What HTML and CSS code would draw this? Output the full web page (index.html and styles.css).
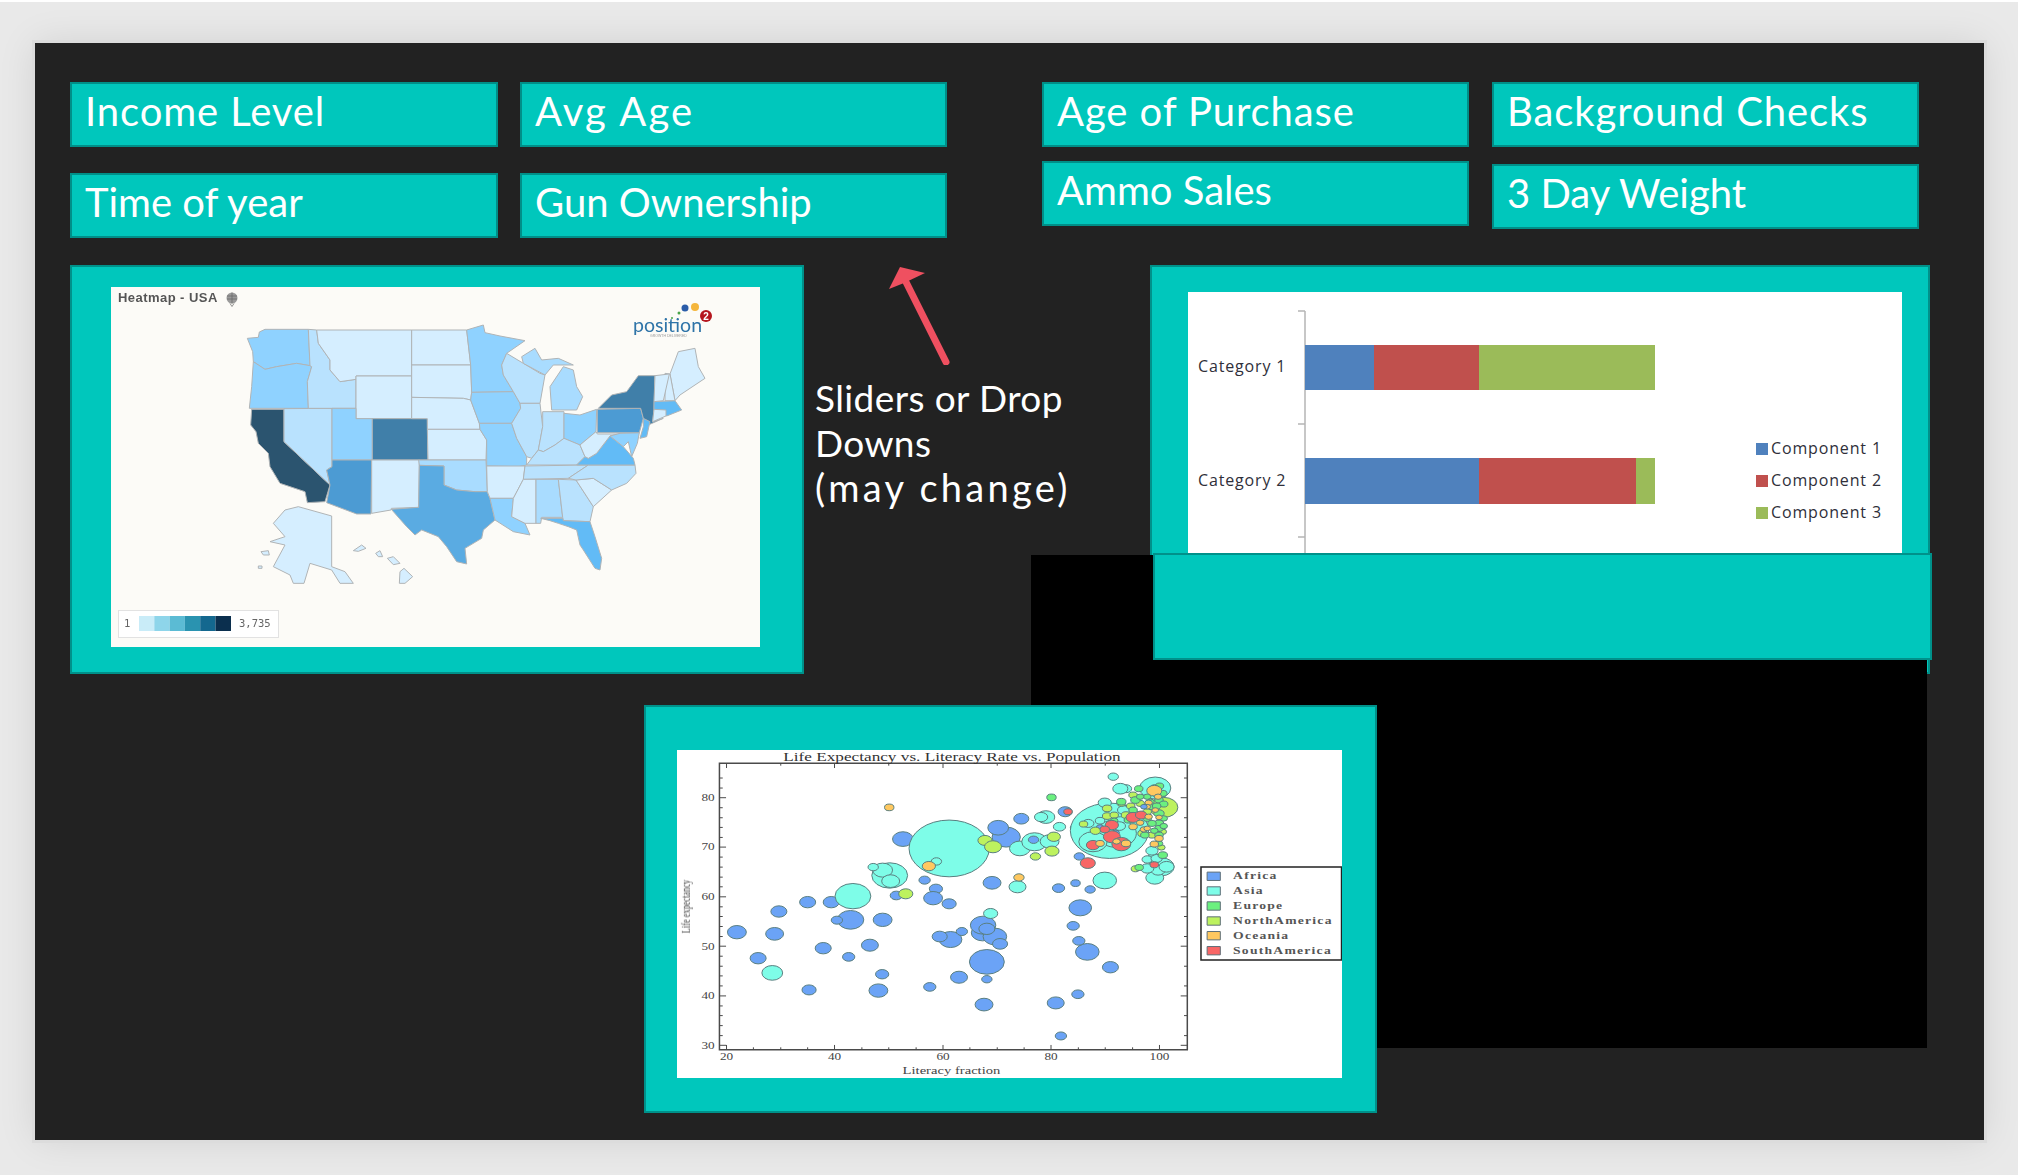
FILE: index.html
```html
<!DOCTYPE html>
<html lang="en">
<head>
<meta charset="utf-8">
<title>Dashboard mockup</title>
<link rel="stylesheet" href="styles.css">
</head>
<body>
<main class="slide">
  <section class="filters">
    <div class="filter-grid">
      <div class="btn wide">Income Level</div>
      <div class="btn xwide">Avg Age</div>
      <div class="btn">Time of year</div>
      <div class="btn">Gun Ownership</div>
    </div>
    <div class="filter-cols">
      <div class="filter-col first">
        <div class="btn wide">Age of Purchase</div>
        <div class="btn">Ammo Sales</div>
      </div>
      <div class="filter-col second">
        <div class="btn wide">Background Checks</div>
        <div class="btn">3 Day Weight</div>
      </div>
    </div>
  </section>

  <section class="middle">
    <div class="panel map-panel">
      <svg class="pic map" viewBox="0 0 649 360">
        <rect class="map-bg" width="649" height="360"/>
        <text class="map-title" x="7" y="15">Heatmap - USA</text>
        <g class="balloon"><circle cx="121" cy="11" r="5.500"/><path d="M116 9h10M116 12h10M121 5.500v11M119 16.500l2 3 2-3"/></g>
        <circle class="logo-o" cx="584" cy="20" r="4"/><circle class="logo-b" cx="574" cy="21" r="3.500"/><circle class="logo-g" cx="568" cy="26" r="1.500"/><circle class="logo-s" cx="561" cy="31" r="1"/>
        <circle class="logo-r" cx="595" cy="29" r="6"/><text class="logo-n" x="595" y="32.500">2</text>
        <text class="logo-t" x="522" y="45">position</text><text class="logo-u" x="539" y="50">GROWTH DELIVERED</text>
        <g transform="translate(119 23) scale(.33333)">
          <g class="states">
            <polygon class="s3" points="52,85 85,82 88,66 105,58 235,58 240,167 200,160 140,170 105,178 70,155 68,125"/>
            <polygon class="s3" points="70,155 105,178 140,170 200,160 240,167 245,170 232,215 235,295 58,295 65,230"/>
            <polygon class="s8" points="65,298 162,298 162,395 300,525 285,575 232,578 225,545 150,520 120,470 115,430 85,400 78,365 62,345"/>
            <polygon class="s1" points="162,296 306,295 306,470 290,480 300,525 162,395"/>
            <polygon class="s1" points="235,58 260,60 265,100 300,150 300,180 330,215 378,208 378,295 235,295 232,215 245,170 240,167"/>
            <polygon class="s0" points="260,60 545,60 545,198 378,198 378,208 330,215 300,180 300,150 265,100"/>
            <polygon class="s0" points="378,198 545,198 545,326 378,326"/>
            <polygon class="s3" points="306,295 378,295 378,326 427,326 427,450 306,450"/>
            <polygon class="s7" points="427,326 592,326 594,450 427,450"/>
            <polygon class="s6" points="306,450 425,450 423,612 380,612 290,578 300,525 290,480 306,470"/>
            <polygon class="s0" points="425,450 568,450 566,592 484,595 483,600 425,610"/>
            <polygon class="s0" points="545,60 710,60 722,165 545,165"/>
            <polygon class="s0" points="545,165 722,165 725,247 722,270 700,265 545,262"/>
            <polygon class="s0" points="545,262 700,265 722,270 748,340 750,358 592,358 592,326 545,326"/>
            <polygon class="s0" points="592,358 750,358 770,390 768,450 594,450"/>
            <polygon class="s2" points="566,450 768,450 772,545 735,545 680,540 642,525 642,468 568,466"/>
            <polygon class="s5" points="568,466 642,468 642,525 680,540 735,545 772,545 780,565 795,630 760,660 755,685 705,715 710,762 680,755 650,710 625,680 575,660 555,675 530,650 484,598 566,592"/>
            <polygon class="s3" points="710,60 760,45 765,68 810,78 885,92 830,130 815,165 820,195 850,245 725,247 722,165"/>
            <polygon class="s3" points="725,247 850,245 870,280 872,295 845,340 748,340 722,270"/>
            <polygon class="s3" points="748,340 845,340 860,385 890,440 890,465 865,470 770,468 770,390 750,358"/>
            <polygon class="s0" points="770,468 885,468 880,508 850,565 780,565 772,545"/>
            <polygon class="s3" points="780,565 850,565 845,620 885,640 900,675 850,665 795,630"/>
            <polygon class="s1" points="830,130 880,160 930,190 945,195 930,280 870,280 850,245 820,195 815,165"/>
            <polygon class="s1" points="870,280 930,280 938,350 925,420 905,445 890,440 860,385 845,340 872,295"/>
            <polygon class="s2" points="875,140 915,115 935,150 985,145 1030,165 970,165 945,195 880,160"/>
            <polygon class="s2" points="965,300 960,230 1000,170 1030,180 1040,230 1058,260 1040,300"/>
            <polygon class="s1" points="938,305 1002,305 1002,385 975,405 940,425 925,420 938,350"/>
            <polygon class="s3" points="1002,310 1050,315 1100,298 1098,365 1050,405 1002,385"/>
            <polygon class="s1" points="890,465 905,445 925,420 940,425 975,405 1002,385 1050,405 1065,440 1040,465"/>
            <polygon class="s1" points="885,468 1075,465 1015,505 880,508"/>
            <polygon class="s0" points="880,508 918,508 918,640 885,640 845,620 850,565"/>
            <polygon class="s2" points="918,508 985,508 998,622 935,622 932,640 918,640"/>
            <polygon class="s1" points="985,508 1038,510 1090,590 1080,635 1000,632 998,622"/>
            <polygon class="s4" points="932,625 998,625 1000,632 1080,635 1095,680 1115,745 1110,780 1095,775 1060,720 1050,705 1040,660 1015,650 985,640 960,632"/>
            <polygon class="s0" points="1038,510 1090,505 1145,540 1090,590"/>
            <polygon class="s1" points="1015,505 1075,465 1215,465 1218,490 1190,520 1145,540 1090,505 1038,510"/>
            <polygon class="s4" points="1040,465 1065,440 1075,445 1100,430 1140,378 1180,410 1210,445 1215,465"/>
            <polygon class="s0" points="1050,405 1098,365 1102,372 1125,372 1170,372 1140,378 1100,430 1075,445 1065,440"/>
            <polygon class="s3" points="1170,370 1228,368 1222,400 1205,440 1195,395 1180,410 1140,378"/>
            <polygon class="s6" points="1102,298 1232,295 1240,325 1228,368 1102,368"/>
            <polygon class="s7" points="1105,295 1145,255 1190,245 1225,197 1275,197 1272,300 1268,335 1300,325 1255,345 1240,325 1232,295"/>
            <polygon class="s4" points="1240,325 1260,335 1250,380 1230,385 1240,350"/>
            <polygon class="s4" points="1272,275 1335,272 1355,300 1310,318 1272,298"/>
            <polygon class="s0" points="1272,298 1308,300 1308,318 1268,335"/>
            <polygon class="s0" points="1320,192 1345,125 1395,115 1405,170 1425,205 1350,255 1335,272"/>
            <polygon class="s0" points="1305,190 1320,192 1335,272 1305,272"/>
            <polygon class="s0" points="1275,197 1318,192 1300,272 1272,275"/>
            <polygon class="s0" points="130,640 165,600 205,590 305,618 305,770 345,785 370,820 330,820 305,780 240,760 222,820 190,820 180,795 130,770 165,705 120,695 165,680"/>
            <polygon class="s0" points="510,785 522,775 548,800 525,820 508,820"/>
            <polygon class="s0" points="370,722 395,705 408,715 385,724"/>
            <polygon class="s0" points="437,730 450,722 458,740 445,740"/>
            <polygon class="s0" points="472,745 490,740 510,760 490,764"/>
            <polygon class="s0" points="93,725 115,722 118,735 100,735"/>
            <polygon class="s0" points="85,768 96,768 96,775 85,775"/>
          </g>
        </g>
        <rect class="map-legend" x="7.500" y="323.500" width="160" height="27"/>
        <text class="map-leg-t" x="13" y="340">1</text>
        <rect class="l1" x="28" y="329" width="15.300" height="15"/><rect class="l2" x="43.300" y="329" width="15.300" height="15"/><rect class="l3" x="58.600" y="329" width="15.300" height="15"/><rect class="l4" x="73.900" y="329" width="15.300" height="15"/><rect class="l5" x="89.200" y="329" width="15.300" height="15"/><rect class="l6" x="104.500" y="329" width="15.500" height="15"/>
        <text class="map-leg-t" x="128" y="340">3,735</text>
      </svg>
    </div>

    <div class="note">
      <svg class="arrow" viewBox="0 0 347 100">
        <line class="arrow-line" x1="142" y1="97" x2="101" y2="15"/>
        <polygon class="arrow-head" points="96,2 121,8 100,18 85,24"/>
      </svg>
      <p class="note-text">Sliders or Drop<br>Downs<br><span class="note-wide">(may change)</span></p>
    </div>

    <div class="panel chart-panel">
      <svg class="pic chart" viewBox="0 0 714 340">
        <rect class="white" width="714" height="340"/>
        <path class="axis" d="M117 19V340M110 19h7M110 132h7M110 245h7"/>
        <rect class="c1" x="117" y="53" width="69" height="45"/><rect class="c2" x="186" y="53" width="105" height="45"/><rect class="c3" x="291" y="53" width="176" height="45"/>
        <rect class="c1" x="117" y="166" width="174" height="46"/><rect class="c2" x="291" y="166" width="157" height="46"/><rect class="c3" x="448" y="166" width="19" height="46"/>
        <text class="chart-t" x="10" y="80">Category 1</text>
        <text class="chart-t" x="10" y="194">Category 2</text>
        <rect class="c1" x="568" y="151" width="12" height="12"/><text class="chart-t" x="583" y="162">Component 1</text>
        <rect class="c2" x="568" y="183" width="12" height="12"/><text class="chart-t" x="583" y="194">Component 2</text>
        <rect class="c3" x="568" y="215" width="12" height="12"/><text class="chart-t" x="583" y="226">Component 3</text>
      </svg>
    </div>
  </section>

  <section class="panel scatter-panel">
    <svg class="pic scatter" viewBox="78 150 1410 983" preserveAspectRatio="none">
      <rect class="white" x="78" y="150" width="1410" height="983"/>
      <g class="bubbles">
        <g class="af">
          <circle cx="205" cy="696" r="20"/><circle cx="250" cy="774" r="17"/><circle cx="285" cy="701" r="19"/><circle cx="294" cy="634" r="17"/><circle cx="355" cy="606" r="17"/><circle cx="405" cy="606" r="17"/><circle cx="388" cy="744" r="17"/><circle cx="442" cy="770" r="13"/><circle cx="446" cy="659" r="28"/><circle cx="417" cy="660" r="12"/><circle cx="514" cy="659" r="20"/><circle cx="487" cy="735" r="18"/><circle cx="513" cy="822" r="14"/><circle cx="358" cy="869" r="15"/><circle cx="505" cy="871" r="20"/><circle cx="543" cy="586" r="13"/><circle cx="603" cy="540" r="12"/><circle cx="627" cy="566" r="14"/><circle cx="621" cy="594" r="20"/><circle cx="655" cy="611" r="15"/><circle cx="658" cy="718" r="24"/><circle cx="635" cy="709" r="16"/><circle cx="682" cy="694" r="12"/><circle cx="726" cy="698" r="24"/><circle cx="727" cy="675" r="27"/><circle cx="752" cy="709" r="25"/><circle cx="735" cy="686" r="17"/><circle cx="763" cy="731" r="16"/><circle cx="735" cy="785" r="37"/><circle cx="735" cy="837" r="11"/><circle cx="614" cy="860" r="13"/><circle cx="676" cy="831" r="18"/><circle cx="729" cy="913" r="19"/><circle cx="746" cy="548" r="19"/><circle cx="557" cy="417" r="22"/><circle cx="776" cy="411" r="30"/><circle cx="759" cy="383" r="22"/><circle cx="808" cy="356" r="16"/><circle cx="901" cy="335" r="15"/><circle cx="923" cy="383" r="11"/><circle cx="931" cy="469" r="11"/><circle cx="881" cy="908" r="18"/><circle cx="928" cy="882" r="13"/><circle cx="892" cy="1007" r="12"/><circle cx="997" cy="801" r="17"/><circle cx="948" cy="755" r="25"/><circle cx="933" cy="623" r="24"/><circle cx="930" cy="722" r="13"/><circle cx="918" cy="677" r="13"/><circle cx="923" cy="549" r="10"/><circle cx="954" cy="568" r="11"/><circle cx="887" cy="564" r="13"/>
        </g>
        <g class="as">
          <circle cx="655" cy="445" r="85"/><circle cx="280" cy="818" r="22"/><circle cx="451" cy="588" r="38"/><circle cx="529" cy="526" r="38"/><circle cx="514" cy="510" r="21"/><circle cx="531" cy="543" r="19"/><circle cx="494" cy="501" r="11"/><circle cx="628" cy="484" r="11"/><circle cx="743" cy="640" r="15"/><circle cx="800" cy="560" r="18"/><circle cx="805" cy="445" r="22"/><circle cx="836" cy="425" r="27"/><circle cx="868" cy="424" r="20"/><circle cx="889" cy="380" r="13"/><circle cx="860" cy="351" r="19"/><circle cx="850" cy="351" r="14"/><circle cx="985" cy="541" r="25"/><circle cx="1003" cy="230" r="11"/><circle cx="1030" cy="266" r="12"/><circle cx="1018" cy="266" r="16"/><circle cx="1092" cy="264" r="33"/><circle cx="995" cy="392" r="83"/><circle cx="1010" cy="400" r="42"/><circle cx="960" cy="425" r="30"/><circle cx="985" cy="308" r="14"/><circle cx="1025" cy="330" r="13"/><circle cx="1018" cy="360" r="10"/><circle cx="1016" cy="378" r="13"/><circle cx="975" cy="362" r="10"/><circle cx="950" cy="370" r="12"/><circle cx="1105" cy="500" r="27"/><circle cx="1091" cy="533" r="19"/><circle cx="1098" cy="510" r="15"/><circle cx="1075" cy="505" r="14"/><circle cx="1116" cy="500" r="16"/><circle cx="1090" cy="475" r="15"/><circle cx="1075" cy="478" r="11"/><circle cx="1095" cy="475" r="12"/><circle cx="1085" cy="452" r="13"/>
        </g>
        <g class="af"><circle cx="834" cy="419" r="11"/><circle cx="1008" cy="398" r="8"/><circle cx="975" cy="382" r="8"/></g>
        <g class="na">
          <circle cx="1110" cy="322" r="30"/><circle cx="731" cy="421" r="15"/><circle cx="748" cy="440" r="18"/><circle cx="877" cy="410" r="14"/><circle cx="873" cy="453" r="15"/><circle cx="838" cy="469" r="11"/><circle cx="563" cy="581" r="15"/><circle cx="1050" cy="506" r="9"/><circle cx="990" cy="325" r="10"/><circle cx="1020" cy="310" r="9"/><circle cx="940" cy="372" r="9"/><circle cx="965" cy="392" r="11"/><circle cx="990" cy="348" r="10"/><circle cx="1045" cy="285" r="9"/><circle cx="1040" cy="318" r="9"/><circle cx="1065" cy="400" r="10"/><circle cx="1005" cy="345" r="9"/><circle cx="1030" cy="345" r="10"/><circle cx="1085" cy="405" r="9"/><circle cx="1105" cy="442" r="8"/><circle cx="1060" cy="310" r="9"/><circle cx="1108" cy="395" r="8"/><circle cx="1075" cy="335" r="9"/>
        </g>
        <g class="eu">
          <circle cx="872" cy="292" r="10"/><circle cx="1057" cy="266" r="9"/><circle cx="1101" cy="258" r="9"/><circle cx="1095" cy="280" r="10"/><circle cx="1100" cy="300" r="9"/><circle cx="1075" cy="290" r="8"/><circle cx="1050" cy="300" r="10"/><circle cx="1020" cy="305" r="10"/><circle cx="1100" cy="340" r="11"/><circle cx="1100" cy="370" r="10"/><circle cx="1100" cy="385" r="9"/><circle cx="1100" cy="405" r="9"/><circle cx="1100" cy="430" r="8"/><circle cx="1058" cy="502" r="9"/><circle cx="1108" cy="465" r="10"/><circle cx="1070" cy="405" r="9"/><circle cx="1045" cy="330" r="9"/><circle cx="1075" cy="355" r="9"/><circle cx="1085" cy="320" r="9"/><circle cx="1035" cy="360" r="9"/><circle cx="1110" cy="355" r="8"/><circle cx="1090" cy="262" r="8"/><circle cx="1108" cy="280" r="9"/><circle cx="1082" cy="305" r="8"/><circle cx="1110" cy="312" r="9"/><circle cx="1095" cy="318" r="9"/><circle cx="1085" cy="370" r="9"/><circle cx="1090" cy="392" r="8"/><circle cx="1060" cy="290" r="8"/><circle cx="1005" cy="362" r="8"/><circle cx="1110" cy="378" r="8"/>
        </g>
        <g class="sa">
          <circle cx="1000" cy="410" r="18"/><circle cx="1020" cy="432" r="20"/><circle cx="960" cy="435" r="14"/><circle cx="1000" cy="375" r="14"/><circle cx="985" cy="388" r="10"/><circle cx="1045" cy="352" r="15"/><circle cx="1062" cy="345" r="12"/><circle cx="907" cy="335" r="9"/><circle cx="949" cy="489" r="16"/><circle cx="1090" cy="494" r="9"/>
        </g>
        <g class="oc">
          <circle cx="528" cy="322" r="10"/><circle cx="612" cy="498" r="14"/><circle cx="803" cy="532" r="11"/><circle cx="1090" cy="272" r="16"/><circle cx="1068" cy="388" r="8"/><circle cx="975" cy="430" r="9"/><circle cx="1030" cy="430" r="10"/><circle cx="1010" cy="424" r="8"/><circle cx="1090" cy="432" r="9"/><circle cx="1100" cy="415" r="9"/><circle cx="1045" cy="380" r="9"/><circle cx="1060" cy="368" r="8"/><circle cx="1078" cy="350" r="8"/><circle cx="1078" cy="308" r="8"/><circle cx="1092" cy="330" r="7"/><circle cx="1098" cy="290" r="8"/><circle cx="1075" cy="320" r="7"/><circle cx="1100" cy="352" r="7"/><circle cx="1075" cy="385" r="7"/>
        </g>
        <g class="af"><circle cx="1068" cy="320" r="7"/></g>
      </g>
      <rect class="frame" x="168" y="190" width="992" height="858"/>
      <path class="ticks" d="M183 1048v-14M240 1048v-7M298 1048v-7M355 1048v-7M412 1048v-14M470 1048v-7M527 1048v-7M585 1048v-7M642 1048v-14M699 1048v-7M757 1048v-7M814 1048v-7M871 1048v-14M929 1048v-7M986 1048v-7M1044 1048v-7M1101 1048v-14M183 190v14M298 190v7M412 190v14M527 190v7M642 190v14M757 190v7M871 190v14M986 190v7M1101 190v14M168 293h14M168 441h14M168 590h14M168 738h14M168 887h14M168 1035h14M168 323h7M168 353h7M168 382h7M168 412h7M168 471h7M168 501h7M168 531h7M168 560h7M168 620h7M168 649h7M168 679h7M168 709h7M168 768h7M168 798h7M168 827h7M168 857h7M168 917h7M168 946h7M168 976h7M168 1006h7M168 264h7M168 234h7M1160 293h-14M1160 441h-14M1160 590h-14M1160 738h-14M1160 887h-14M1160 1035h-14M1160 353h-7M1160 412h-7M1160 501h-7M1160 560h-7M1160 649h-7M1160 709h-7M1160 798h-7M1160 857h-7M1160 946h-7M1160 1006h-7M1160 234h-7"/>
      <text class="sc-title" x="661" y="182">Life Expectancy vs. Literacy Rate vs. Population</text>
      <text class="sc-num" x="144" y="303">80</text><text class="sc-num" x="144" y="451">70</text><text class="sc-num" x="144" y="600">60</text><text class="sc-num" x="144" y="748">50</text><text class="sc-num" x="144" y="897">40</text><text class="sc-num" x="144" y="1045">30</text>
      <text class="sc-num" x="183" y="1080">20</text><text class="sc-num" x="412" y="1080">40</text><text class="sc-num" x="642" y="1080">60</text><text class="sc-num" x="871" y="1080">80</text><text class="sc-num" x="1101" y="1080">100</text>
      <text class="sc-axis" x="660" y="1122">Literacy fraction</text>
      <text class="sc-ylab" transform="translate(105 619) rotate(-90)">Life expectancy</text>
      <rect class="sc-legend" x="1189" y="501" width="298" height="278"/>
      <rect class="af-k" x="1202" y="516" width="28" height="25"/><text class="sc-leg" x="1257" y="537">Africa</text>
      <rect class="as-k" x="1202" y="560" width="28" height="25"/><text class="sc-leg" x="1257" y="582">Asia</text>
      <rect class="eu-k" x="1202" y="605" width="28" height="25"/><text class="sc-leg" x="1257" y="627">Europe</text>
      <rect class="na-k" x="1202" y="650" width="28" height="25"/><text class="sc-leg" x="1257" y="671">NorthAmerica</text>
      <rect class="oc-k" x="1202" y="694" width="28" height="25"/><text class="sc-leg" x="1257" y="716">Oceania</text>
      <rect class="sa-k" x="1202" y="739" width="28" height="25"/><text class="sc-leg" x="1257" y="760">SouthAmerica</text>
    </svg>
  </section>

  <div class="blackout"></div>
  <div class="cover"></div>
</main>
</body>
</html>
```
FILE: styles.css
```css
html, body { margin: 0; padding: 0; }
body {
  width: 2018px;
  height: 1175px;
  overflow: hidden;
  background: #e9e9e9;
  font-family: "Lato", "Liberation Sans", sans-serif;
  border-top: 2px solid #fff;
  box-sizing: border-box;
}
.slide {
  position: relative;
  box-sizing: border-box;
  width: 1949px;
  height: 1097px;
  margin: 41px 0 0 35px;
  padding: 39px 0 0 35px;
  background: #222;
  box-shadow: 0 0 0 3px #dcdcdc, 0 0 36px rgba(0, 0, 0, .1);
}
.filters { display: flex; align-items: flex-start; }
.filter-grid {
  display: grid;
  grid-template-columns: 428px 427px;
  grid-auto-rows: 65px;
  column-gap: 22px;
  row-gap: 26px;
}
.filter-cols { display: flex; gap: 23px; margin-left: 95px; }
.filter-col { display: flex; flex-direction: column; width: 427px; }
.filter-col.first { gap: 14px; }
.filter-col.second { gap: 17px; }
.btn {
  box-sizing: border-box;
  height: 65px;
  padding: 2px 0 0 13px;
  background: #00c7bc;
  border: 2px solid #008f88;
  color: #fff;
  font-size: 40px;
  line-height: 50px;
  white-space: nowrap;
}
.btn.wide { letter-spacing: .9px; }
.btn.xwide { letter-spacing: 2.200px; }
.panel {
  box-sizing: border-box;
  background: #00c7bc;
  border: 2px solid #00918a;
}
.pic { display: block; }
.middle { display: flex; align-items: flex-start; margin-top: 27px; }
.map-panel { width: 734px; height: 409px; padding: 20px 0 0 39px; }
.map { width: 649px; height: 360px; filter: blur(.6px); }
.note { width: 346px; flex: none; }
.arrow { display: block; width: 347px; height: 100px; }
.arrow-line { stroke: #ef5060; stroke-width: 7; stroke-linecap: round; }
.arrow-head { fill: #ef5060; }
.note-text {
  margin: 11px 0 0 11px;
  color: #fff;
  font-size: 37px;
  line-height: 44.5px;
  letter-spacing: .4px;
}
.note-wide { font-size: 38px; letter-spacing: 3.300px; }
.chart-panel { width: 780px; height: 409px; padding: 25px 0 0 36px; }
.chart { width: 714px; height: 340px; }
.white { fill: #fff; }
.axis { fill: none; stroke: #b5b5b5; stroke-width: 1.500; }
.c1 { fill: #4f81bd; }
.c2 { fill: #c0504d; }
.c3 { fill: #9bbb59; }
.chart-t { font-family: "Open Sans", sans-serif; font-size: 16px; letter-spacing: .85px; fill: #2f2f3a; }
.scatter-panel {
  position: relative;
  z-index: 1;
  width: 733px;
  height: 408px;
  margin: 31px 0 0 574px;
  padding: 43px 0 0 31px;
}
.scatter { width: 665px; height: 328px; filter: blur(.7px); }
.blackout {
  position: absolute;
  left: 996px;
  top: 512px;
  width: 896px;
  height: 493px;
  background: #000;
}
.cover {
  position: absolute;
  box-sizing: border-box;
  left: 1118px;
  top: 510px;
  width: 779px;
  height: 107px;
  background: #00c7bc;
  border: 2px solid #00918a;
}
.map-bg { fill: #fcfbf7; }
.map-title { font-family: "Liberation Sans", sans-serif; font-size: 13px; font-weight: 700; letter-spacing: .45px; fill: #555; }
.balloon circle { fill: #9a9a9a; }
.balloon path { fill: none; stroke: #666; stroke-width: .7; }
.logo-o { fill: #f5b63c; }
.logo-b { fill: #2a5ca8; }
.logo-g { fill: #4aa54a; }
.logo-s { fill: #4aa54a; }
.logo-r { fill: #b5161e; }
.logo-n { font-family: "Liberation Sans", sans-serif; font-size: 10px; font-weight: 700; fill: #fff; text-anchor: middle; }
.logo-t { font-family: "Lato", sans-serif; font-size: 19.500px; fill: #2f74a8; }
.logo-u { font-family: "Liberation Sans", sans-serif; font-size: 3.500px; fill: #999; }
.states polygon { stroke: #b0b4b6; stroke-width: 3; stroke-linejoin: round; }
.s0 { fill: #d5eeff; }
.s1 { fill: #b9e2fe; }
.s2 { fill: #a9dcff; }
.s3 { fill: #8fd2ff; }
.s4 { fill: #62bbf6; }
.s5 { fill: #5aabe2; }
.s6 { fill: #4c9bd3; }
.s7 { fill: #407fa9; }
.s8 { fill: #2b546f; }
.map-legend { fill: #fff; stroke: #e2e2e2; }
.map-leg-t { font-family: "DejaVu Sans Mono", monospace; font-size: 10.500px; fill: #666; }
.l1 { fill: #c9ecf8; }
.l2 { fill: #8ed5ea; }
.l3 { fill: #5bbbd4; }
.l4 { fill: #2a93b0; }
.l5 { fill: #14688f; }
.l6 { fill: #0b2f4e; }
.bubbles circle { stroke: #5a7f80; stroke-width: 1; vector-effect: non-scaling-stroke; }
.af circle, .af-k { fill: #6ba3f6; }
.as circle, .as-k { fill: #7efde8; }
.eu circle, .eu-k { fill: #6bf07f; }
.na circle, .na-k { fill: #bdf25e; }
.oc circle, .oc-k { fill: #ffc860; }
.sa circle, .sa-k { fill: #f86666; }
.af-k, .as-k, .eu-k, .na-k, .oc-k, .sa-k { stroke: #5f6f78; stroke-width: 1; vector-effect: non-scaling-stroke; }
.frame { fill: none; stroke: #4a4a4a; stroke-width: 1.500; vector-effect: non-scaling-stroke; }
.ticks { fill: none; stroke: #4a4a4a; stroke-width: 1; vector-effect: non-scaling-stroke; }
.sc-title { font-family: "Liberation Serif", serif; font-size: 36.500px; fill: #333; text-anchor: middle; }
.sc-num { font-family: "Liberation Serif", serif; font-size: 28px; fill: #444; text-anchor: middle; }
.sc-axis { font-family: "Liberation Serif", serif; font-size: 31px; fill: #444; text-anchor: middle; }
.sc-ylab { font-family: "Liberation Serif", serif; font-size: 25px; fill: #444; text-anchor: middle; }
.sc-legend { fill: #fff; stroke: #222; stroke-width: 1.500; vector-effect: non-scaling-stroke; }
.sc-leg { font-family: "Liberation Serif", serif; font-size: 29px; font-weight: 700; fill: #555; letter-spacing: 2.600px; }
```
